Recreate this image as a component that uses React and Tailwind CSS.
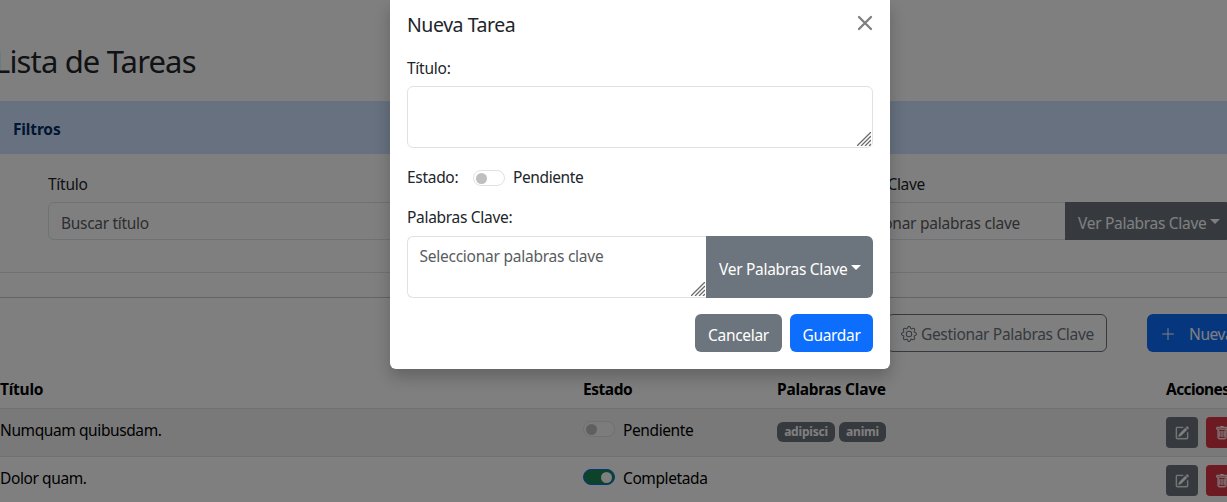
import { BsGear, BsPencilSquare, BsPlusLg, BsTrash } from "react-icons/bs";

function Caret() {
  return <span className="ml-1 -mt-[3px] border-x-[5px] border-t-[5px] border-x-transparent border-t-current" />;
}

function Grip() {
  return (
    <svg className="absolute right-[1px] bottom-[1px]" width="14" height="14" viewBox="0 0 14 14" fill="none" stroke="#6b6b6b" strokeWidth="1.3">
      <path d="M0 14L14 0M4 14L14 4M8 14L14 8M12 14L14 12" />
    </svg>
  );
}

function Switch({ on, dim }) {
  return (
    <span className={"flex h-4 w-8 shrink-0 items-center rounded-full border px-[2px] " + (on ? "justify-end border-[#0d6efd] bg-[#198754]" : dim ? "border-[#dee2e6] bg-white/50" : "border-[#dee2e6] bg-white")}>
      <span className={on ? "size-[11px] rounded-full bg-white" : "size-[11px] rounded-full bg-[#bfbfbf]"} />
    </span>
  );
}

function Row({ title, on, state, tags, striped }) {
  return (
    <div className={"flex h-12 shrink-0 items-start border-b border-[#dee2e6] pt-2 text-black " + (striped ? "bg-[#f2f2f2]" : "")}>
      <div className="w-[583px] pt-px tracking-[-0.4px]">{title}</div>
      <div className="flex w-[194px] items-start gap-2">
        <span className="pt-1"><Switch on={on} dim /></span>
        <span className="pt-px tracking-[-0.4px]">{state}</span>
      </div>
      <div className="flex w-[389px] gap-1 pt-[5px]">
        {tags.map((t) => (
          <span key={t.name} className={"flex h-5 items-center justify-center rounded-md bg-[#6c757d] text-xs font-bold tracking-[-0.2px] text-white " + t.width}>{t.name}</span>
        ))}
      </div>
      <div className="flex gap-2">
        <span className="flex h-[31px] w-8 items-center justify-center rounded bg-[#6c757d] text-sm text-white"><BsPencilSquare strokeWidth="0.4" /></span>
        <span className="flex h-[31px] w-8 items-center justify-center rounded bg-[#dc3545] text-sm text-white"><BsTrash strokeWidth="0.4" /></span>
      </div>
    </div>
  );
}

function Page() {
  return (
    <div className="flex h-full w-[1280px] flex-col bg-white text-[#212529]">
      <h1 className="-ml-[6px] flex h-[101px] shrink-0 items-end pb-[21px] text-[31px] leading-[38px] tracking-[-0.85px] whitespace-nowrap">Lista de Tareas</h1>
      <div className="flex h-[53px] shrink-0 items-center bg-[#cfe2ff] pt-[2px] pl-[13px] font-bold tracking-[-0.15px] text-[#052c65]">Filtros</div>
      <div className="flex h-[119px] shrink-0 border-b border-[#dee2e6] pt-[18px] pl-12">
        <div className="w-[753px]">
          <div className="h-[30px] tracking-[-0.25px]">Título</div>
          <div className="flex h-[38px] w-[730px] items-center rounded-md border border-[#dee2e6] pt-[3px] pl-3 tracking-[-0.3px] text-[#595c5f]">Buscar título</div>
        </div>
        <div className="w-[430px]">
          <div className="h-[30px] w-[124px] text-right tracking-[-0.3px]">Palabras Clave</div>
          <div className="flex h-[38px]">
            <div className="flex w-[264px] shrink-0 items-center justify-end border-y border-[#dee2e6] pt-[3px] pr-[45px] tracking-[-0.25px] whitespace-nowrap text-[#595c5f]">Seleccionar palabras clave</div>
            <div className="flex w-[166px] shrink-0 items-center rounded-r-md bg-[#6c757d] pt-[3px] pl-[13px] tracking-[-0.3px] text-white">Ver Palabras Clave<Caret /></div>
          </div>
        </div>
      </div>
      <div className="h-[25px] shrink-0 border-b border-[#c8c9ca]" />
      <div className="flex h-[75px] shrink-0 pt-4 pl-[887px]">
        <div className="flex h-[38px] w-[220px] items-center rounded-md border border-[#6c757d] pt-px pl-[13px] tracking-[-0.33px] whitespace-nowrap text-[#6c757d]"><BsGear className="mr-1 size-4 shrink-0" /><span className="pt-px">Gestionar Palabras Clave</span></div>
        <div className="ml-10 flex h-[38px] w-[133px] items-center rounded-md bg-[#0d6efd] pt-px pl-[13px] tracking-[-0.4px] whitespace-nowrap text-white"><BsPlusLg className="mr-[13px] size-4 shrink-0" /><span className="pt-px">Nueva Tarea</span></div>
      </div>
      <div className="flex h-9 shrink-0 border-b border-[#dee2e6] pt-1 font-bold tracking-[-0.25px] text-black">
        <div className="w-[583px]">Título</div>
        <div className="w-[194px] tracking-[-0.45px]">Estado</div>
        <div className="w-[389px]">Palabras Clave</div>
        <div className="tracking-[-0.6px]">Acciones</div>
      </div>
      <Row title="Numquam quibusdam." state="Pendiente" striped tags={[{ name: "adipisci", width: "w-[58px]" }, { name: "animi", width: "w-[47px]" }]} />
      <Row title="Dolor quam." state="Completada" on tags={[]} />
    </div>
  );
}

function Modal() {
  return (
    <div className="flex h-[369px] w-[500px] flex-col rounded-b-md bg-white px-[17px] tracking-[-0.3px] text-[#212529] shadow-[0_8px_16px_rgba(0,0,0,0.22)]">
      <div className="flex h-[55px] items-start justify-between">
        <div className="pt-[10px] text-[19.5px] leading-[30px] tracking-[-0.45px]">Nueva Tarea</div>
        <svg className="mt-[15px] opacity-50" width="16" height="16" viewBox="0 0 16 16" fill="none" stroke="black" strokeWidth="2.3" strokeLinecap="round"><path d="M2 2L14 14M14 2L2 14" /></svg>
      </div>
      <div className="h-[31px] pt-px tracking-[-0.25px]">Título:</div>
      <div className="relative h-[62px] rounded-md border border-[#dee2e6]"><Grip /></div>
      <div className="flex h-[57px] items-start pt-[17px]">
        <span className="w-[66px]">Estado:</span>
        <span className="mr-2 pt-[5px]"><Switch /></span>
        <span className="tracking-[-0.4px]">Pendiente</span>
      </div>
      <div className="h-[31px]">Palabras Clave:</div>
      <div className="flex h-[62px]">
        <div className="relative w-[299px] rounded-l-md border border-r-0 border-[#dee2e6] pt-[7px] pl-[11.5px] tracking-[-0.25px] text-[#595c5f]">Seleccionar palabras clave<Grip /></div>
        <div className="flex w-[167px] items-center rounded-r-md bg-[#6c757d] pt-[3px] pl-[13px] text-white">Ver Palabras Clave<Caret /></div>
      </div>
      <div className="mt-4 flex justify-end gap-2 text-white">
        <div className="flex h-[38px] w-[87px] items-center justify-center rounded-md bg-[#6c757d] pt-[3px]">Cancelar</div>
        <div className="flex h-[38px] w-[83px] items-center justify-center rounded-md bg-[#0d6efd] pt-[3px]">Guardar</div>
      </div>
    </div>
  );
}

export default function App() {
  return (
    <div className="relative h-[502px] w-[1227px] overflow-hidden font-['Noto_Sans',sans-serif] text-[15.5px] leading-6">
      <Page />
      <div className="absolute inset-0 flex items-start bg-black/50 pl-[390px]">
        <Modal />
      </div>
    </div>
  );
}
